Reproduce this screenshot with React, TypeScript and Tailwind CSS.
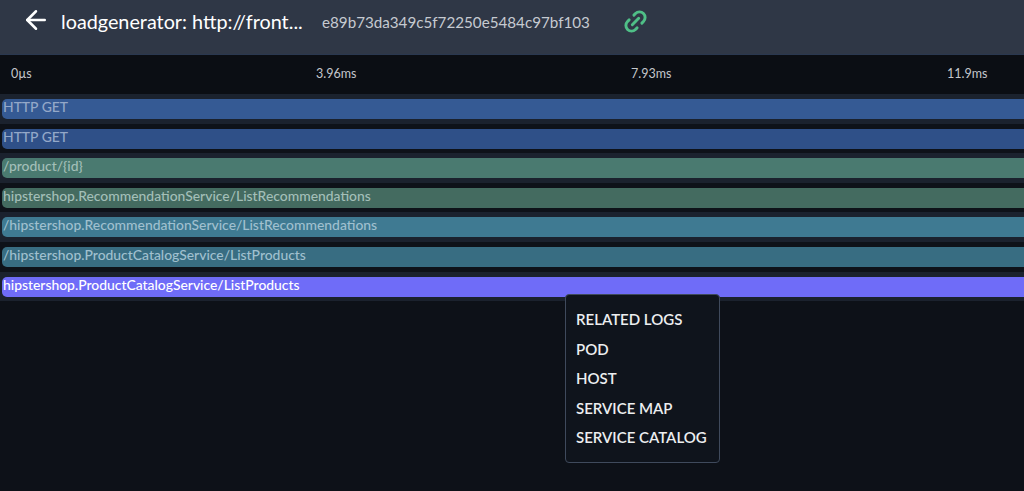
import { ArrowLeft, Link2 } from "lucide-react";

const spans = [
  { name: "HTTP GET", bar: "bg-[#355a94]", text: "text-[#94a8c8]", row: "bg-[#1b222e]" },
  { name: "HTTP GET", bar: "bg-[#2f5088]", text: "text-[#94a8c8]", row: "bg-[#0e1219]" },
  { name: "/product/{id}", bar: "bg-[#4a7a70]", text: "text-[#a3bfb8]", row: "bg-[#1b222e]" },
  { name: "hipstershop.RecommendationService/ListRecommendations", bar: "bg-[#446b60]", text: "text-[#a3bfb8]", row: "bg-[#0e1219]" },
  { name: "/hipstershop.RecommendationService/ListRecommendations", bar: "bg-[#3f7a92]", text: "text-[#a0c0cf]", row: "bg-[#1b222e]" },
  { name: "/hipstershop.ProductCatalogService/ListProducts", bar: "bg-[#386d82]", text: "text-[#a0c0cf]", row: "bg-[#0e1219]" },
  { name: "hipstershop.ProductCatalogService/ListProducts", bar: "bg-[#6f6cf8]", text: "text-white", row: "bg-[#1b222e]" },
];

const menu = ["RELATED LOGS", "POD", "HOST", "SERVICE MAP", "SERVICE CATALOG"];

export default function App() {
  return (
    <div className="relative h-[491px] w-[1024px] overflow-hidden bg-[#0d1118] font-['Lato',sans-serif]">
      <header className="flex h-[55px] items-start border-b border-[#2a3850] bg-[#2f3746] pl-[21px] pt-[5px]">
        <ArrowLeft className="h-[30px] w-[30px] text-white" strokeWidth={2} />
        <h1 className="ml-[10px] mt-[3px] w-[261px] truncate text-[19.8px] leading-[26px] text-white">loadgenerator: http://front...</h1>
        <span className="mt-[4px] w-[300px] text-[15.2px] leading-[27px] text-[#c6cad1]">e89b73da349c5f72250e5484c97bf103</span>
        <Link2 className="mt-[3px] h-[27px] w-[27px] -rotate-45 text-[#4fbf87]" strokeWidth={2.6} />
      </header>

      <div className="flex h-[39px] items-center bg-[#0b0e14] pl-[11px] text-[12.5px] text-[#c4c7cc]">
        <span className="w-[305px] shrink-0">0µs</span>
        <span className="w-[315px] shrink-0">3.96ms</span>
        <span className="w-[316px] shrink-0">7.93ms</span>
        <span className="shrink-0">11.9ms</span>
      </div>

      <div className="flex flex-col">
        {spans.map((s, i) => (
          <div key={i} className={`h-[29.6px] pl-[2px] pt-[5px] ${s.row}`}>
            <div className={`h-5 rounded-l-[5px] pl-px text-[13.9px] font-medium leading-[15px] ${s.bar} ${s.text}`}>{s.name}</div>
          </div>
        ))}
      </div>

      <div className="absolute left-[565px] top-[294px] flex h-[169px] w-[155px] flex-col gap-[11px] rounded-[4px] border border-[#3f4a5c] bg-[#0f141c] pl-[10px] pt-[15px] text-[15px] font-semibold leading-[18.5px] text-[#eceef0]">
        {menu.map((m) => (
          <div key={m}>{m}</div>
        ))}
      </div>
    </div>
  );
}
